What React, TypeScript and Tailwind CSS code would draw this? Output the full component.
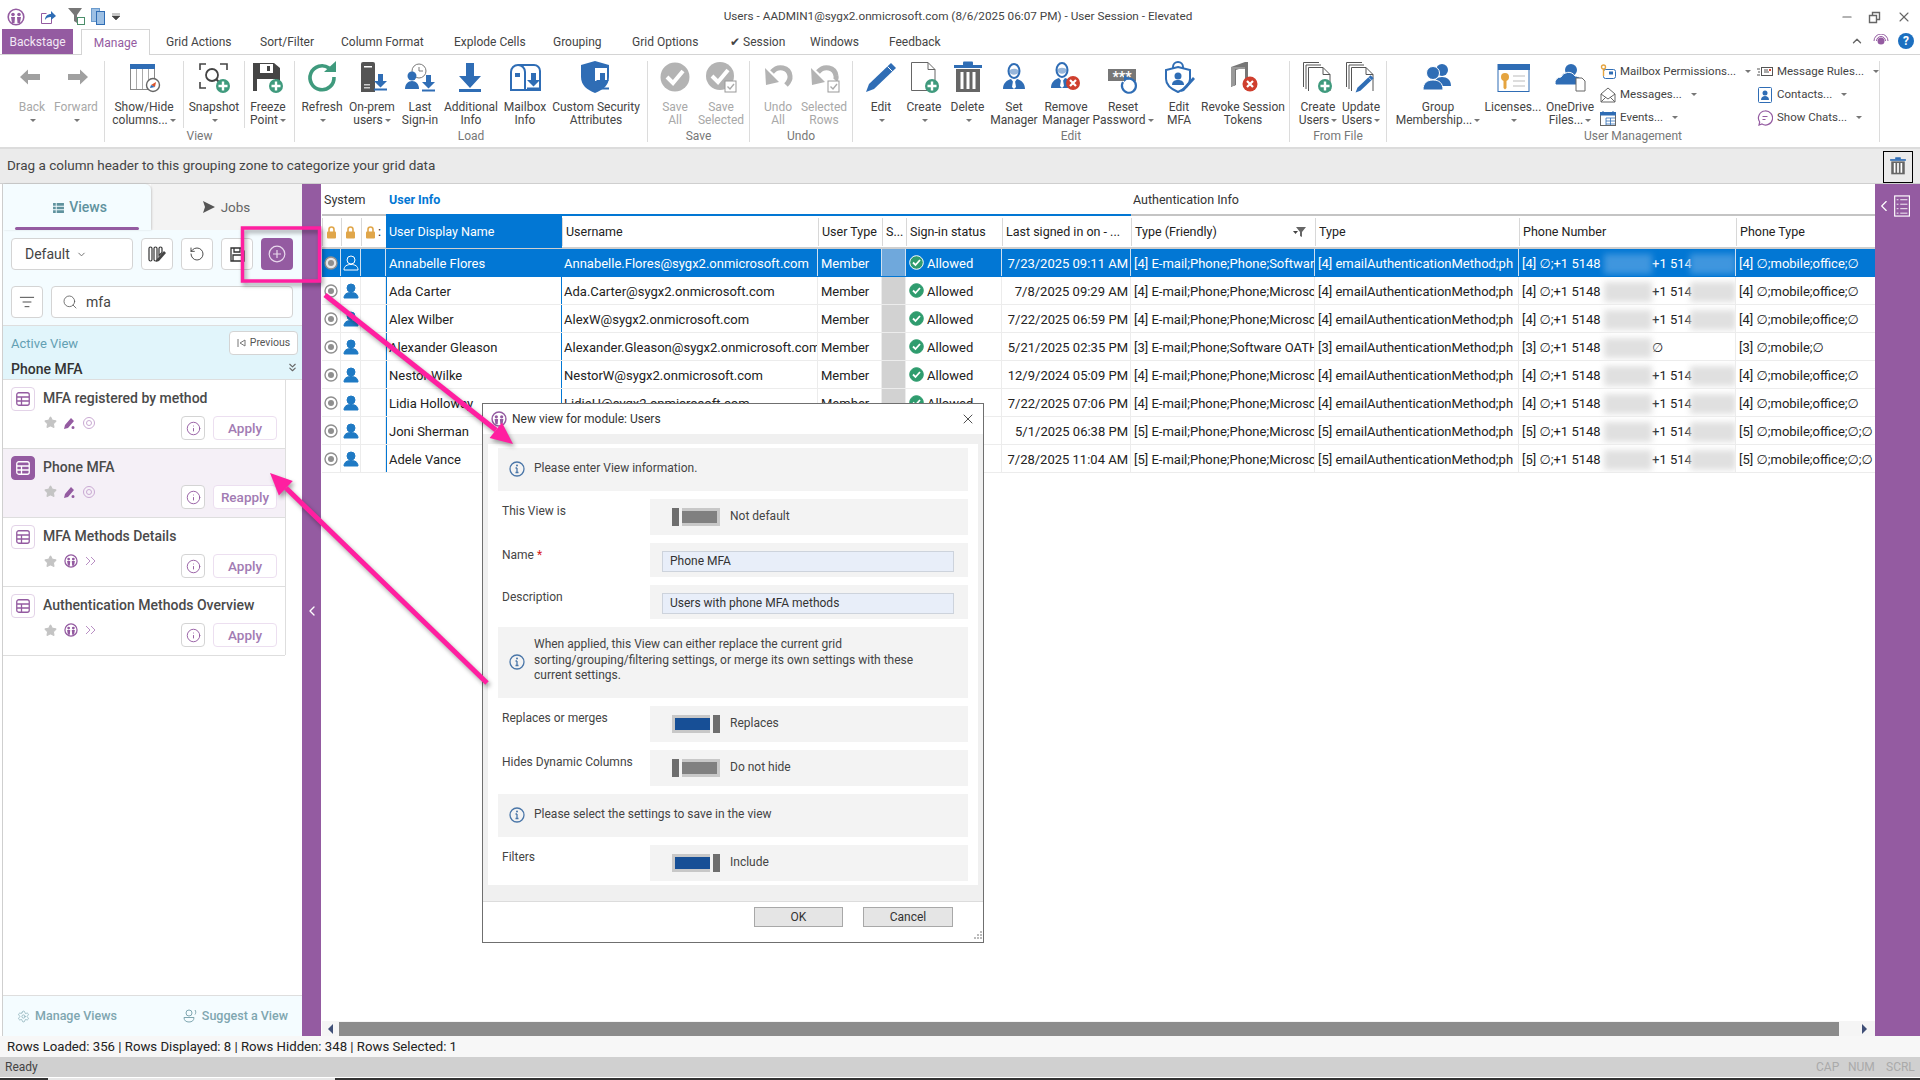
import React from 'react';
import { ChevronDown, ChevronLeft, ChevronUp, ChevronsDown, Info, ListFilter, Minus, RotateCcw, Search, Settings, Star, X } from 'lucide-react';

const BLUE = '#2f6db5';
const GREEN = '#3f9a7d';
const RED = '#cf3f2e';
const GRAY = '#b3b3b3';

const PlusBadge = ({ x, y, r = 7 }: { x: number; y: number; r?: number }) => (
  <g>
    <circle cx={x} cy={y} r={r} fill={GREEN} />
    <path d={`M${x - r + 2.5} ${y}H${x + r - 2.5}M${x} ${y - r + 2.5}V${y + r - 2.5}`} stroke="#fff" strokeWidth="2.4" />
  </g>
);
const XBadge = ({ x, y, r = 7 }: { x: number; y: number; r?: number }) => (
  <g>
    <circle cx={x} cy={y} r={r} fill={RED} />
    <path d={`M${x - 3} ${y - 3}L${x + 3} ${y + 3}M${x + 3} ${y - 3}L${x - 3} ${y + 3}`} stroke="#fff" strokeWidth="2.2" />
  </g>
);
const Dl = ({ x, y }: { x: number; y: number }) => (
  <g transform={`translate(${x} ${y})`}>
    <path d="M4 0h5v7h4l-6.5 6.5L0 7h4z" fill={BLUE} />
    <rect y="14.5" width="13" height="2" fill={BLUE} />
  </g>
);
const CheckBox = () => (
  <g>
    <rect x="20" y="20" width="11" height="11" fill="#fff" stroke="#999" />
    <path d="M22.5 25.5l2.5 2.5 4-5" fill="none" stroke="#aaa" strokeWidth="1.4" />
  </g>
);
const Person = ({ x = 0, y = 0 }: { x?: number; y?: number }) => (
  <g transform={`translate(${x} ${y})`}>
    <ellipse cx="12" cy="8" rx="5.5" ry="7" fill="none" stroke={BLUE} strokeWidth="2" />
    <path d="M7 8c2-3 8-3 10 0-1 5-9 5-10 0z" fill={BLUE} opacity=".5" />
    <path d="M1 26c0-6 4-9 8-10l3 4 3-4c4 1 8 4 8 10z" fill={BLUE} />
    <path d="M11 18h2l1 6-2 2-2-2z" fill="#fff" />
  </g>
);
const Stack = () => (
  <g fill="none" stroke="#555" strokeWidth="1">
    <path d="M1.500 26V1.500H17" />
    <path d="M4 28V4h15" />
    <path d="M6.500 30V6.500H21l7 7V30" fill="#fff" />
    <path d="M21 6.500v7h7" />
  </g>
);
const Pencil = ({ t }: { t: string }) => (
  <g transform={t}>
    <path d="M26 2l5 5L9 28l-8 3 3-8z" fill={BLUE} />
    <path d="M22.500 5.500l5 5" stroke="#fff" strokeWidth="1" />
  </g>
);

const icons: Record<string, React.ReactNode> = {
  back: <path d="M4 16l8-7.500V13h12v6H12v4.500z" fill="#a0a0a0" />,
  forward: <path d="M28 16l-8-7.500V13H8v6h12v4.500z" fill="#a0a0a0" />,
  showhide: (
    <g>
      <rect x="2.500" y="3.500" width="24" height="25" fill="#fff" stroke="#888" />
      <rect x="2" y="3" width="25" height="5" fill={BLUE} />
      <path d="M8.500 8v20M14.500 8v20M20.500 8v20" stroke="#aaa" />
      <circle cx="25" cy="24" r="6.500" fill="#fff" stroke="#666" strokeWidth="1.400" />
      <path d="M28 21l-5 3 4 2z" fill="#d9532c" />
      <path d="M22 27l1-3 4 2z" fill={BLUE} />
    </g>
  ),
  snapshot: (
    <g>
      <path d="M2 9V3h6M22 3h7v6M2 21v6h6" fill="none" stroke="#444" strokeWidth="1.600" />
      <circle cx="14" cy="14" r="6" fill="none" stroke="#444" strokeWidth="1.800" />
      <path d="M18 18l3 3" stroke="#444" strokeWidth="2" />
      <PlusBadge x={25} y={25} />
    </g>
  ),
  freeze: (
    <g>
      <path d="M1 2h21l6 5v23H1z" fill="#454545" />
      <rect x="8" y="3" width="13" height="9" fill="#fff" />
      <rect x="15" y="5" width="3" height="5" fill="#454545" />
      <rect x="5" y="18" width="18" height="12" fill="#fff" />
      <PlusBadge x={24} y={25} />
    </g>
  ),
  refresh: (
    <g>
      <path d="M23 7a12 12 0 1 0 5 9" fill="none" stroke={GREEN} strokeWidth="3.600" />
      <path d="M18 11L30 0v11z" fill={GREEN} />
    </g>
  ),
  onprem: (
    <g>
      <path d="M5 3a2 2 0 0 1 2-2h10a2 2 0 0 1 2 2v28H5z" fill="#545454" />
      <rect x="8" y="5" width="8" height="1.500" fill="#fff" />
      <rect x="8" y="26" width="6" height="1.500" fill="#ccc" />
      <rect x="8" y="23" width="6" height="1.500" fill="#ccc" />
      <Dl x={18} y={13} />
    </g>
  ),
  last: (
    <g>
      <circle cx="15" cy="10" r="7" fill="#fff" stroke="#7a7a7a" />
      <path d="M15 6v4h4" fill="none" stroke="#7a7a7a" />
      <circle cx="8" cy="15" r="4.500" fill={BLUE} />
      <path d="M1 28c0-5 3-8 7-8s7 3 7 8z" fill={BLUE} />
      <Dl x={18} y={14} />
    </g>
  ),
  additional: (
    <g>
      <path d="M11 2h8v13h7L15 27 4 15h7z" fill={BLUE} />
      <rect x="4" y="28" width="22" height="3" fill={BLUE} />
    </g>
  ),
  mailbox: (
    <g>
      <path d="M2 29V11a7 7 0 0 1 7-7h16a6 6 0 0 1 6 6v19z" fill="#fff" stroke={BLUE} strokeWidth="2" />
      <path d="M9 4a7 7 0 0 1 7 7v18" fill="none" stroke={BLUE} strokeWidth="2" />
      <rect x="6" y="12" width="5" height="4" fill={BLUE} />
      <Dl x={18} y={12} />
    </g>
  ),
  custom: (
    <g>
      <path d="M15 0l14 4v12c0 8-6 13-14 16C7 29 1 24 1 16V4z" fill={BLUE} />
      <path d="M15 7h12v13H15z" fill="#fff" />
      <Dl x={16} y={12} />
    </g>
  ),
  saveall: (
    <g>
      <circle cx="16" cy="16" r="14.500" fill={GRAY} />
      <path d="M8 16l6 6 10-12" fill="none" stroke="#fff" strokeWidth="4" />
    </g>
  ),
  savesel: (
    <g>
      <circle cx="15" cy="15" r="14" fill={GRAY} />
      <path d="M7 15l6 6 10-12" fill="none" stroke="#fff" strokeWidth="4" />
      <CheckBox />
    </g>
  ),
  undoall: (
    <g>
      <path d="M10 11c6-7 17-5 18 4 .5 4-2 7-4 9" fill="none" stroke={GRAY} strokeWidth="5" />
      <path d="M3 7l1 17 13-3z" fill={GRAY} />
    </g>
  ),
  undosel: (
    <g>
      <path d="M10 11c6-7 17-5 18 4 .5 2 0 3-1 4" fill="none" stroke={GRAY} strokeWidth="5" />
      <path d="M3 7l1 17 13-3z" fill={GRAY} />
      <CheckBox />
    </g>
  ),
  edit: <Pencil t="translate(0 0)" />,
  create: (
    <g>
      <path d="M3.500 1.500H20l7 7v21H3.500z" fill="#fff" stroke="#666" />
      <path d="M20 1.500v7h7" fill="none" stroke="#666" />
      <PlusBadge x={24} y={25} />
    </g>
  ),
  trash: (
    <g>
      <rect x="2" y="4" width="28" height="3" fill={BLUE} />
      <rect x="11" y="0.500" width="10" height="4" rx="1" fill={BLUE} />
      <rect x="4" y="8" width="24" height="23" fill="#666" />
      <path d="M10 11v17M16 11v17M22 11v17" stroke="#fff" strokeWidth="3" />
    </g>
  ),
  setmgr: <Person x={4} y={2} />,
  removemgr: (
    <g>
      <Person x={0} y={1} />
      <XBadge x={23} y={22} />
    </g>
  ),
  reset: (
    <g>
      <rect x="1" y="8" width="28" height="12" fill="#777" />
      <text x="15" y="21" textAnchor="middle" fontSize="14" fontFamily="Roboto" fontWeight="700" fill="#fff">***</text>
      <path d="M16 21a7 7 0 1 0 4-3" fill="#fff" stroke={BLUE} strokeWidth="2.200" />
      <path d="M17 14l5 3-5 4z" fill={BLUE} />
    </g>
  ),
  editmfa: (
    <g>
      <path d="M10 7V6a5 5 0 0 1 10 0v1" fill="none" stroke={BLUE} strokeWidth="2" />
      <path d="M15 6l12 3v9c0 6-5 10-12 13C8 28 3 24 3 18V9z" fill="#fff" stroke={BLUE} strokeWidth="2" />
      <circle cx="15" cy="15" r="3.500" fill={BLUE} />
      <path d="M9 24c0-4 3-5 6-5s6 1 6 5z" fill={BLUE} />
      <path d="M30 16l2 2-11 12-3 1 1-3z" fill={BLUE} />
    </g>
  ),
  revoke: (
    <g>
      <path d="M4 6l14-5h3v20h-3V6L9 9v15l-5 2z" fill="#777" />
      <path d="M4 6h14v2H8v17H4z" fill="#999" />
      <XBadge x={23} y={23} r={7.500} />
    </g>
  ),
  createusers: (
    <g>
      <Stack />
      <PlusBadge x={23} y={25} />
    </g>
  ),
  updateusers: (
    <g>
      <Stack />
      <Pencil t="translate(10 13) scale(.6)" />
    </g>
  ),
  group: (
    <g fill={BLUE}>
      <circle cx="20" cy="9" r="6" />
      <path d="M12 25c0-6 3-9 8-9s9 3 9 9z" />
      <circle cx="11" cy="12" r="6.500" fill={BLUE} stroke="#fff" />
      <path d="M1 29c0-7 4-10 10-10s10 3 10 10z" stroke="#fff" />
    </g>
  ),
  licenses: (
    <g>
      <rect x="1" y="3.500" width="31" height="27" fill="#fff" stroke={BLUE} />
      <rect x="1" y="3" width="32" height="6" fill={BLUE} />
      <circle cx="8" cy="16" r="4" fill="#e5a43f" />
      <path d="M6.500 18h3v9l-1.500 1.500L6.500 27z" fill="#e5a43f" />
      <path d="M16 15h12M16 20h12M16 25h12" stroke="#bbb" />
    </g>
  ),
  onedrive: (
    <g>
      <circle cx="17" cy="9" r="6" fill={BLUE} />
      <path d="M1 23a6 6 0 0 1 6-7 8 8 0 0 1 14-1c5 0 8 4 7 8v1H2z" fill={BLUE} stroke="#fff" />
      <path d="M22 17h6l3 3v10h-9z" fill="#fff" stroke="#666" />
    </g>
  ),
};

type RibbonItem = { icon: string; w: string; lines: string[]; caret?: boolean; off?: boolean };
type RibbonGroup = { label?: string; w: string; pad?: string; items: (RibbonItem | 'sep')[] };

const groups: RibbonGroup[] = [
  {
    w: 'w-[105px]',
    pad: 'pl-[10px]',
    items: [
      { icon: 'back', w: 'w-[44px]', lines: ['Back'], caret: true, off: true },
      { icon: 'forward', w: 'w-[44px]', lines: ['Forward'], caret: true, off: true },
    ],
  },
  {
    label: 'View',
    w: 'w-[190px]',
    items: [
      { icon: 'showhide', w: 'w-[78px]', lines: ['Show/Hide', 'columns...'], caret: true },
      'sep',
      { icon: 'snapshot', w: 'w-[60px]', lines: ['Snapshot'], caret: true },
      'sep',
      { icon: 'freeze', w: 'w-[46px]', lines: ['Freeze', 'Point'], caret: true },
    ],
  },
  {
    label: 'Load',
    w: 'w-[353px]',
    items: [
      { icon: 'refresh', w: 'w-[54px]', lines: ['Refresh'], caret: true },
      { icon: 'onprem', w: 'w-[46px]', lines: ['On-prem', 'users'], caret: true },
      { icon: 'last', w: 'w-[50px]', lines: ['Last', 'Sign-in'] },
      { icon: 'additional', w: 'w-[52px]', lines: ['Additional', 'Info'] },
      { icon: 'mailbox', w: 'w-[56px]', lines: ['Mailbox', 'Info'] },
      { icon: 'custom', w: 'w-[86px]', lines: ['Custom Security', 'Attributes'] },
    ],
  },
  {
    label: 'Save',
    w: 'w-[102px]',
    pad: 'pl-[4px]',
    items: [
      { icon: 'saveall', w: 'w-[46px]', lines: ['Save', 'All'], off: true },
      { icon: 'savesel', w: 'w-[46px]', lines: ['Save', 'Selected'], off: true },
    ],
  },
  {
    label: 'Undo',
    w: 'w-[103px]',
    pad: 'pl-[5px]',
    items: [
      { icon: 'undoall', w: 'w-[46px]', lines: ['Undo', 'All'], off: true },
      { icon: 'undosel', w: 'w-[46px]', lines: ['Selected', 'Rows'], off: true },
    ],
  },
  {
    label: 'Edit',
    w: 'w-[437px]',
    pad: 'pl-[5px]',
    items: [
      { icon: 'edit', w: 'w-[46px]', lines: ['Edit'], caret: true },
      { icon: 'create', w: 'w-[40px]', lines: ['Create'], caret: true },
      { icon: 'trash', w: 'w-[47px]', lines: ['Delete'], caret: true },
      { icon: 'setmgr', w: 'w-[46px]', lines: ['Set', 'Manager'] },
      { icon: 'removemgr', w: 'w-[58px]', lines: ['Remove', 'Manager'] },
      { icon: 'reset', w: 'w-[56px]', lines: ['Reset', 'Password'], caret: true },
      { icon: 'editmfa', w: 'w-[56px]', lines: ['Edit', 'MFA'] },
      { icon: 'revoke', w: 'w-[72px]', lines: ['Revoke Session', 'Tokens'] },
    ],
  },
  {
    label: 'From File',
    w: 'w-[97px]',
    pad: 'pl-[6px]',
    items: [
      { icon: 'createusers', w: 'w-[44px]', lines: ['Create', 'Users'], caret: true },
      { icon: 'updateusers', w: 'w-[42px]', lines: ['Update', 'Users'], caret: true },
    ],
  },
];

const umItems: RibbonItem[] = [
  { icon: 'group', w: 'w-[92px]', lines: ['Group', 'Membership...'], caret: true },
  { icon: 'licenses', w: 'w-[58px]', lines: ['Licenses...'], caret: true },
  { icon: 'onedrive', w: 'w-[56px]', lines: ['OneDrive', 'Files...'], caret: true },
];

const Caret = () => <span className="inline-block w-0 h-0 ml-[2px] mb-[2px] border-x-[3px] border-x-transparent border-t-[3px] border-t-[#777]" />;

const RibbonBtn = ({ item }: { item: RibbonItem }) => (
  <div className={`${item.w} flex flex-col items-center shrink-0 ${item.off ? 'text-[#a8a8a8]' : 'text-[#444]'}`}>
    <div className="h-[40px] w-full flex justify-center items-start">
      <svg width="32" height="32" viewBox="0 0 32 32" className="overflow-visible">{icons[item.icon]}</svg>
    </div>
    <div className="leading-[13px] text-center whitespace-nowrap">{item.lines[0]}</div>
    <div className="leading-[13px] text-center whitespace-nowrap">
      {item.lines[1]}
      {item.caret && <Caret />}
    </div>
  </div>
);

const SmallIcon = ({ name }: { name: string }) => (
  <svg width="16" height="16" viewBox="0 0 16 16" className="shrink-0">
    {name === 'perm' && (
      <g>
        <rect x="3.500" y="5.500" width="12" height="9" rx="2" fill="#fff" stroke={BLUE} />
        <rect x="9" y="7.500" width="4" height="3" fill={BLUE} />
        <circle cx="3.500" cy="3" r="2" fill="none" stroke="#e5a43f" strokeWidth="1.400" />
        <path d="M3.500 5v7" stroke="#e5a43f" strokeWidth="1.400" />
      </g>
    )}
    {name === 'msg' && <path d="M1 7l7-6 7 6v8H1zM1 7l7 5 7-5M1 15l5-5M15 15l-5-5" fill="#fff" stroke="#666" />}
    {name === 'cal' && (
      <g>
        <rect x="0.500" y="2.500" width="15" height="13" fill="#fff" stroke="#666" />
        <rect y="2" width="16" height="3.500" fill={BLUE} />
        <path d="M6 8h9M6 11h9M6 14h9M6 8v7M10.500 8v7" stroke={BLUE} strokeWidth=".8" />
        <path d="M3 1v3M13 1v3" stroke={BLUE} />
      </g>
    )}
    {name === 'rules' && (
      <g>
        <rect x="4.500" y="3.500" width="11" height="8" fill="#fff" stroke="#555" />
        <path d="M0 5h3M1 8h2M0 11h3M7 6h4M7 8h5" stroke="#555" />
        <rect x="12" y="5" width="2" height="2" fill="#d9432f" />
      </g>
    )}
    {name === 'contact' && (
      <g>
        <rect x="1.500" y="0.500" width="13" height="15" rx="1" fill="#fff" stroke={BLUE} />
        <circle cx="8" cy="6" r="2.500" fill={BLUE} />
        <path d="M4 13c0-3 2-4 4-4s4 1 4 4z" fill={BLUE} />
      </g>
    )}
    {name === 'chat' && <path d="M8 1a7 7 0 1 1-3 13l-3 1 .7-3A7 7 0 0 1 8 1zM5.500 6.500h5M5.500 9.500h3" fill="#fff" stroke="#945ba1" strokeWidth="1.200" />}
  </svg>
);

const SmallBtn = ({ icon, text }: { icon: string; text: string }) => (
  <div className="flex items-center h-[23px] text-[#444] text-[11.500px] whitespace-nowrap">
    <SmallIcon name={icon} />
    <span className="ml-[4px]">{text}</span>
    <span className="ml-[7px]">
      <Caret />
    </span>
  </div>
);

const tabs = [
  { t: 'Grid Actions', w: 'w-[94px]' },
  { t: 'Sort/Filter', w: 'w-[81px]' },
  { t: 'Column Format', w: 'w-[113px]' },
  { t: 'Explode Cells', w: 'w-[99px]' },
  { t: 'Grouping', w: 'w-[79px]' },
  { t: 'Grid Options', w: 'w-[98px]' },
  { t: '✔ Session', w: 'w-[80px]' },
  { t: 'Windows', w: 'w-[79px]' },
  { t: 'Feedback', w: 'w-[80px]' },
];

const AppLogo = ({ size = 18 }: { size?: number }) => (
  <svg width={size} height={size} viewBox="0 0 18 18">
    <circle cx="9" cy="9" r="7.800" fill="#fff" stroke="#945ba1" strokeWidth="1.600" />
    <circle cx="6" cy="6.500" r="1.800" fill="#945ba1" />
    <circle cx="12" cy="6.500" r="1.800" fill="#945ba1" />
    <path d="M4 9h4l-.5 6H5zM10 9h4l-1 6h-2.500z" fill="#945ba1" />
  </svg>
);

const TitleBar = () => (
  <div className="h-[29px] shrink-0 flex items-center pt-[4px]">
    <div className="flex items-center pl-[7px]">
      <AppLogo />
      <svg width="16" height="16" viewBox="0 0 16 16" className="ml-[15px]">
        <path d="M1.500 4.500h5M1.500 4.500v10h10v-5" fill="none" stroke="#945ba1" />
        <path d="M5 11c0-4 3-6 6-6V2l5 5-5 4V8c-3 0-5 1-6 3z" fill={BLUE} />
      </svg>
      <svg width="18" height="20" viewBox="0 0 18 20" className="ml-[12px]">
        <path d="M0 1h14L9 8v8l-3-2V8z" fill="#777" />
        <rect x="9.500" y="10.500" width="7" height="7" fill="#fff" stroke="#4b8f6a" />
      </svg>
      <svg width="14" height="18" viewBox="0 0 14 18" className="ml-[5px]">
        <rect x="0.500" y="0.500" width="8" height="13" fill="#9dc0e4" stroke="#6b9bcd" />
        <rect x="5.500" y="3.500" width="8" height="13" fill="#9dc0e4" stroke={BLUE} />
      </svg>
      <svg width="8" height="8" viewBox="0 0 8 8" className="ml-[7px]">
        <path d="M0 1h8M0 3h8L4 7z" fill="#444" stroke="#444" strokeWidth=".6" />
      </svg>
    </div>
    <div className="flex-1 text-center text-[#444] text-[11.750px] pr-[44px]">Users - AADMIN1@sygx2.onmicrosoft.com (8/6/2025 06:07 PM) - User Session - Elevated</div>
    <div className="flex items-center gap-[14px] pr-[8px] text-[#666]">
      <Minus size={14} />
      <svg width="14" height="14" viewBox="0 0 14 14">
        <path d="M1.500 5.500h7v7h-7zM4.500 5.500v-3h7v7h-3" fill="none" stroke="#666" strokeWidth="1.400" />
      </svg>
      <X size={16} strokeWidth={1.600} />
    </div>
  </div>
);

const Tabs = () => (
  <div className="h-[26px] shrink-0 flex items-stretch border-b border-[#d4d4d4] pl-[2px]">
    <div className="w-[71px] h-[25px] bg-[#945ba1] text-[#f2e8f4] flex items-center justify-center">Backstage</div>
    <div className="ml-[8px] w-[69px] h-[26px] bg-white border border-b-0 border-[#d4d4d4] text-[#945ba1] flex items-center justify-center pt-[1px]">Manage</div>
    {tabs.map((t) => (
      <div key={t.t} className={`${t.w} pl-[16px] pt-[1px] flex items-center text-[#444] whitespace-nowrap`}>{t.t}</div>
    ))}
    <div className="ml-auto flex items-center gap-[9px] pr-[6px] pb-[2px]">
      <ChevronUp size={14} className="text-[#666]" strokeWidth={2.400} />
      <svg width="16" height="14" viewBox="0 0 16 14">
        <circle cx="8" cy="7" r="3.500" fill="#945ba1" />
        <path d="M1 7a7 7 0 0 1 14 0M3.500 7a4.500 4.500 0 0 1 9 0" fill="none" stroke="#945ba1" />
      </svg>
      <div className="w-[16px] h-[16px] rounded-full bg-[#1c6fc0] text-white text-[12px] font-bold flex items-center justify-center">?</div>
    </div>
  </div>
);

const Ribbon = () => (
  <div className="h-[94px] shrink-0 flex border-b-2 border-[#dcdcdc] pt-[6px]">
    {groups.map((g, i) => (
      <div key={i} className={`${g.w} h-[81px] shrink-0 flex flex-col border-r border-[#dcdcdc]`}>
        <div className={`h-[69px] flex ${g.pad ?? ''}`}>
          {g.items.map((it, j) => (it === 'sep' ? <div key={j} className="w-px h-[67px] bg-[#dcdcdc] shrink-0" /> : <RibbonBtn key={j} item={it} />))}
        </div>
        <div className="h-[12px] leading-[13px] text-center text-[#777]">{g.label}</div>
      </div>
    ))}
    <div className="w-[493px] h-[81px] shrink-0 flex flex-col border-r border-[#dcdcdc]">
      <div className="h-[69px] flex pl-[5px]">
        {umItems.map((it) => (
          <RibbonBtn key={it.icon} item={it} />
        ))}
        <div className="w-[160px] pl-[2px] -mt-[1px] flex flex-col">
          <SmallBtn icon="perm" text="Mailbox Permissions..." />
          <SmallBtn icon="msg" text="Messages..." />
          <SmallBtn icon="cal" text="Events..." />
        </div>
        <div className="-mt-[1px] flex flex-col">
          <SmallBtn icon="rules" text="Message Rules..." />
          <SmallBtn icon="contact" text="Contacts..." />
          <SmallBtn icon="chat" text="Show Chats..." />
        </div>
      </div>
      <div className="h-[12px] leading-[13px] text-center text-[#777]">User Management</div>
    </div>
  </div>
);

const GroupZone = () => (
  <div className="h-[35px] shrink-0 bg-[#ebebeb] flex items-center pl-[7px] pr-[7px] text-[13.500px] text-[#444] border-b border-[#cfcfcf]">
    <span className="flex-1 pb-[2px]">Drag a column header to this grouping zone to categorize your grid data</span>
    <div className="w-[30px] h-[32px] mt-[2px] border border-black flex items-center justify-center">
      <svg width="18" height="22" viewBox="0 0 32 36">{icons.trash}</svg>
    </div>
  </div>
);

const TableIcon = ({ color }: { color: string }) => (
  <svg width="14" height="14" viewBox="0 0 14 14">
    <rect x="0.750" y="0.750" width="12.500" height="12.500" rx="2" fill="none" stroke={color} strokeWidth="1.300" />
    <path d="M1 5h12M1 9h12M5.500 5v8.500" stroke={color} strokeWidth="1.300" />
  </svg>
);

const views = [
  { name: 'MFA registered by method', kind: 'mine', btn: 'Apply', active: false },
  { name: 'Phone MFA', kind: 'mine', btn: 'Reapply', active: true },
  { name: 'MFA Methods Details', kind: 'shared', btn: 'Apply', active: false },
  { name: 'Authentication Methods Overview', kind: 'shared', btn: 'Apply', active: false },
];

const ViewItem = ({ v }: { v: (typeof views)[number] }) => (
  <div className={`h-[69px] border-b border-[#dedede] relative pl-[8px] pt-[7px] flex ${v.active ? 'bg-[#f5f0f7]' : 'bg-white'}`}>
    <div className={`w-[24px] h-[24px] rounded-[4px] border flex items-center justify-center ${v.active ? 'bg-[#945ba1] border-[#945ba1]' : 'bg-white border-[#e3d3e8]'}`}>
      <TableIcon color={v.active ? '#fff' : '#945ba1'} />
    </div>
    <div className="ml-[8px] flex-1">
      <div className="text-[14px] leading-[20px] pt-[1px] font-medium text-[#4a4a4a] whitespace-nowrap">{v.name}</div>
      <div className="flex items-center gap-[7px] mt-[8px] ml-[1px]">
        <Star size={13} fill="#c4c4c4" stroke="#c4c4c4" />
        {v.kind === 'mine' ? (
          <>
            <svg width="12" height="12" viewBox="0 0 12 12">
              <path d="M0 12l1-4 6-7 3 3-6 7zM9 9a1.500 1.500 0 1 1 0 3 1.500 1.500 0 0 1 0-3z" fill="#945ba1" />
            </svg>
            <svg width="12" height="12" viewBox="0 0 12 12">
              <circle cx="6" cy="6" r="5.500" fill="none" stroke="#c9a9d2" />
              <path d="M3.500 6a2.500 2.500 0 0 1 5 0M8.500 6a2.500 2.500 0 0 1-5 0" fill="none" stroke="#c9a9d2" />
            </svg>
          </>
        ) : (
          <>
            <AppLogo size={14} />
            <svg width="12" height="10" viewBox="0 0 12 10">
              <path d="M1 1l4 4-4 4M6 1l4 4-4 4" fill="none" stroke="#b98fc4" />
            </svg>
          </>
        )}
      </div>
    </div>
    <div className="absolute right-[8px] bottom-[8px] flex gap-[8px]">
      <div className="w-[24px] h-[24px] rounded-[4px] border border-[#d4d4d4] bg-white flex items-center justify-center">
        <Info size={15} className="text-[#945ba1]" strokeWidth={1.500} />
      </div>
      <div className="w-[64px] h-[24px] rounded-[4px] border border-[#ecdff0] bg-white flex items-center justify-center text-[13.500px] font-medium text-[#a27bb3]">{v.btn}</div>
    </div>
  </div>
);

const ToolBtn = ({ children }: { children: React.ReactNode }) => (
  <div className="w-[32px] h-[32px] bg-white border border-[#d4d4d4] rounded-[4px] flex items-center justify-center text-[#333]">{children}</div>
);

const Sidebar = () => (
  <div className="w-[300px] shrink-0 flex flex-col border-l border-[#cfcfcf] ml-[2px] bg-white">
    <div className="flex h-[46px] shrink-0">
      <div className="w-[148px] relative bg-[#f4fcff] rounded-tr-[6px] flex items-center justify-center gap-[5px] pl-[6px] pt-[1px] text-[14px] font-medium text-[#5f929e] shadow-[1px_0_2px_rgba(0,0,0,0.15)]">
        <svg width="11" height="10" viewBox="0 0 12 11" fill="#5f929e">
          <path d="M0 0h3v3H0zM4 0h8v3H4zM0 4h3v3H0zM4 4h8v3H4zM0 8h3v3H0zM4 8h8v3H4z" />
        </svg>
        Views
        <div className="absolute left-[12px] right-[12px] bottom-[0px] h-[3px] rounded-full bg-[#945ba1]" />
      </div>
      <div className="flex-1 bg-[#f3f3f3] flex items-center justify-center gap-[6px] text-[13.500px] text-[#666]">
        <svg width="12" height="12" viewBox="0 0 12 12">
          <path d="M0 0l12 6-12 6 2-6z" fill="#555" />
        </svg>
        Jobs
      </div>
    </div>
    <div className="h-[96px] shrink-0 bg-[#f4fcff] border-b border-[#dedede] pl-[8px] pt-[8px] flex flex-col gap-[16px]">
      <div className="flex h-[32px]">
        <div className="w-[122px] h-[32px] bg-white border border-[#d4d4d4] rounded-[4px] flex items-center pl-[13px] gap-[6px] text-[14px] text-[#444]">
          Default <ChevronDown size={11} className="text-[#666]" />
        </div>
        <div className="ml-[8px] flex gap-[8px]">
          <ToolBtn>
            <svg width="18" height="16" viewBox="0 0 18 16">
              <path d="M1 2.500a1.500 1.500 0 0 1 3 0v11a1.500 1.500 0 0 1-3 0zM6 2.500a1.500 1.500 0 0 1 3 0v11a1.500 1.500 0 0 1-3 0zM11 2.500a1.500 1.500 0 0 1 3 0v4l-3 3z" fill="none" stroke="#333" strokeWidth="1.200" />
              <path d="M16 5l2 2-7 8-3 1 1-3z" fill="#444" />
            </svg>
          </ToolBtn>
          <ToolBtn>
            <RotateCcw size={16} strokeWidth={1.300} />
          </ToolBtn>
          <ToolBtn>
            <svg width="15" height="15" viewBox="0 0 15 15">
              <path d="M1 1h10l3 3v10H1zM4 1v4h6V1M3 14V8h9v6" fill="none" stroke="#333" strokeWidth="1.300" />
            </svg>
          </ToolBtn>
          <div className="w-[32px] h-[32px] bg-[#945ba1] rounded-[4px] flex items-center justify-center">
            <svg width="18" height="18" viewBox="0 0 18 18">
              <circle cx="9" cy="9" r="7.800" fill="none" stroke="#e8d8ec" strokeWidth="1.200" />
              <path d="M9 5v8M5 9h8" stroke="#e8d8ec" strokeWidth="1.200" />
            </svg>
          </div>
        </div>
      </div>
      <div className="flex gap-[8px]">
        <ToolBtn>
          <ListFilter size={16} strokeWidth={1.300} />
        </ToolBtn>
        <div className="w-[242px] h-[32px] bg-white border border-[#d4d4d4] rounded-[4px] flex items-center pl-[10px] gap-[8px] text-[14px] text-[#444]">
          <Search size={16} strokeWidth={1.200} className="text-[#555]" />
          mfa
        </div>
      </div>
    </div>
    <div className="h-[54px] shrink-0 bg-[#e1f5fb] border-b border-[#dedede] relative pl-[8px]">
      <div className="pt-[9px] text-[13px] leading-[18px] text-[#63a0b3]">Active View</div>
      <div className="mt-[7px] text-[14px] leading-[18px] font-medium text-[#333]">Phone MFA</div>
      <div className="absolute right-[4px] top-[5px] w-[69px] h-[24px] bg-white border border-[#d4d4d4] rounded-[4px] flex items-center justify-center gap-[4px] text-[10.500px] text-[#555]">
        <svg width="9" height="8" viewBox="0 0 9 8">
          <path d="M1 0v8M8 1L3 4l5 3z" fill="none" stroke="#777" />
        </svg>
        Previous
      </div>
      <ChevronsDown size={13} className="absolute right-[3px] bottom-[5px] text-[#666]" />
    </div>
    <div className="flex-1">
      <div className="w-[283px] h-[275px] border-r border-[#dedede]">
        {views.map((v) => (
          <ViewItem key={v.name} v={v} />
        ))}
      </div>
    </div>
    <div className="h-[41px] shrink-0 bg-[#f4fcff] border-t border-[#dedede] flex items-center justify-between pl-[14px] pr-[14px] text-[12.500px] font-medium text-[#7fa6b0]">
      <div className="flex items-center gap-[5px]">
        <Settings size={13} strokeWidth={1.300} />
        Manage Views
      </div>
      <div className="flex items-center gap-[5px]">
        <svg width="14" height="14" viewBox="0 0 14 14">
          <circle cx="6" cy="4" r="3" fill="none" stroke="#7fa6b0" />
          <path d="M1 8.500h10c0 3-2 4.500-5 4.500s-5-1.500-5-4.500zM12 1c1 1.500 1 3 0 4.500" fill="none" stroke="#7fa6b0" />
        </svg>
        Suggest a View
      </div>
    </div>
  </div>
);

const gridCols = 'grid grid-cols-[19px_20px_25px_176px_256px_64px_24px_96px_129px_184px_204px_217px_139px]';

type Row = { name: string; user: string; date: string; friendly: string; n: string; phone2: boolean; ptype: string };

const mic = 'E-mail;Phone;Phone;Microsc';
const rows: Row[] = [
  { name: 'Annabelle Flores', user: 'Annabelle.Flores@sygx2.onmicrosoft.com', date: '7/23/2025 09:11 AM', friendly: '[4] E-mail;Phone;Phone;Softwar', n: '[4]', phone2: true, ptype: '[4] ∅;mobile;office;∅' },
  { name: 'Ada Carter', user: 'Ada.Carter@sygx2.onmicrosoft.com', date: '7/8/2025 09:29 AM', friendly: `[4] ${mic}`, n: '[4]', phone2: true, ptype: '[4] ∅;mobile;office;∅' },
  { name: 'Alex Wilber', user: 'AlexW@sygx2.onmicrosoft.com', date: '7/22/2025 06:59 PM', friendly: `[4] ${mic}`, n: '[4]', phone2: true, ptype: '[4] ∅;mobile;office;∅' },
  { name: 'Alexander Gleason', user: 'Alexander.Gleason@sygx2.onmicrosoft.com', date: '5/21/2025 02:35 PM', friendly: '[3] E-mail;Phone;Software OATH', n: '[3]', phone2: false, ptype: '[3] ∅;mobile;∅' },
  { name: 'Nestor Wilke', user: 'NestorW@sygx2.onmicrosoft.com', date: '12/9/2024 05:09 PM', friendly: `[4] ${mic}`, n: '[4]', phone2: true, ptype: '[4] ∅;mobile;office;∅' },
  { name: 'Lidia Holloway', user: 'LidiaH@sygx2.onmicrosoft.com', date: '7/22/2025 07:06 PM', friendly: `[4] ${mic}`, n: '[4]', phone2: true, ptype: '[4] ∅;mobile;office;∅' },
  { name: 'Joni Sherman', user: 'JoniS@sygx2.onmicrosoft.com', date: '5/1/2025 06:38 PM', friendly: `[5] ${mic}`, n: '[5]', phone2: true, ptype: '[5] ∅;mobile;office;∅;∅' },
  { name: 'Adele Vance', user: 'AdeleV@sygx2.onmicrosoft.com', date: '7/28/2025 11:04 AM', friendly: `[5] ${mic}`, n: '[5]', phone2: true, ptype: '[5] ∅;mobile;office;∅;∅' },
];

const Lock = () => (
  <svg width="11" height="13" viewBox="0 0 11 13">
    <path d="M3 6V3.500a2.500 2.500 0 0 1 5 0V6" fill="none" stroke="#e0a64a" strokeWidth="1.600" />
    <rect x="1" y="5.500" width="9" height="7" rx="1" fill="#e0a64a" />
  </svg>
);

const HeadCell = ({ children, active }: { children?: React.ReactNode; active?: boolean }) => (
  <div className={`flex items-center whitespace-nowrap overflow-hidden ${active ? 'h-[32px] bg-[#0277d4] text-white pl-[3px]' : 'h-[28px] mt-[2px] border-l border-[#d8d8d8] pl-[3px] text-[#222]'}`}>{children}</div>
);

const Blur = ({ sel }: { sel: boolean }) => <span className={`shrink-0 block h-[20px] blur-[3px] ${sel ? 'bg-[#3f96de]' : 'bg-[#e0e0e0]'}`} />;

const GridRow = ({ r, sel }: { r: Row; sel: boolean }) => {
  const cell = `flex items-center overflow-hidden whitespace-nowrap pl-[3px] pt-[3px] border-r ${sel ? 'border-[#cfe0f0]' : 'border-[#ececec]'}`;
  return (
    <div className={`${gridCols} h-[28px] border-b ${sel ? 'bg-[#0277d4] text-white border-[#0277d4]' : 'bg-white text-[#222] border-[#ececec]'}`}>
      <div className={`${cell} !pl-0 !pt-0 justify-center`}>
        <svg width="14" height="14" viewBox="0 0 14 14">
          <circle cx="7" cy="7" r="6" fill={sel ? '#e8e8e8' : '#fff'} stroke="#8f8f8f" strokeWidth="1.400" />
          <circle cx="7" cy="7" r="3" fill="#8f8f8f" />
        </svg>
      </div>
      <div className={`${cell} !pl-0 !pt-0 justify-center`}>
        <svg width="16" height="16" viewBox="0 0 16 16">
          <circle cx="8" cy="5" r="4" fill={sel ? 'none' : '#1f7ac4'} stroke={sel ? '#fff' : '#1f7ac4'} />
          <path d="M1 15c0-4 3-5.500 7-5.500s7 1.500 7 5.500z" fill={sel ? 'none' : '#1f7ac4'} stroke={sel ? '#fff' : '#1f7ac4'} />
        </svg>
      </div>
      <div className={cell} />
      <div className={`${cell} border-l border-l-[#0277d4] !border-r-[#0277d4] !pl-[2px]`}>{r.name}</div>
      <div className={`${cell} !pl-[2px]`}>{r.user}</div>
      <div className={cell}>Member</div>
      <div className={`${cell} ${sel ? 'bg-[#6fa8dc]' : 'bg-[#d2d2d2]'}`} />
      <div className={`${cell} gap-[3px]`}>
        <svg width="15" height="15" viewBox="0 0 15 15" className="shrink-0 -mt-[3px]">
          <circle cx="7.500" cy="7.500" r="6.800" fill="#2f9c6e" stroke={sel ? '#fff' : '#2f9c6e'} />
          <path d="M4 7.500l2.500 2.500L11 5" fill="none" stroke="#fff" strokeWidth="1.800" />
        </svg>
        Allowed
      </div>
      <div className={`${cell} justify-end pr-[2px]`}>{r.date}</div>
      <div className={cell}>{r.friendly}</div>
      <div className={cell}>{`${r.n} emailAuthenticationMethod;ph`}</div>
      <div className={cell}>
        <span className="w-[82px] shrink-0">{`${r.n} ∅;+1 5148`}</span>
        <span className="w-[48px] shrink-0">
          <Blur sel={sel} />
        </span>
        {r.phone2 ? (
          <>
            <span className="w-[38px] shrink-0">+1 514</span>
            <span className="w-[46px] shrink-0">
              <Blur sel={sel} />
            </span>
          </>
        ) : (
          <span>∅</span>
        )}
      </div>
      <div className="flex items-center overflow-hidden whitespace-nowrap pl-[3px] pt-[3px]">{r.ptype}</div>
    </div>
  );
};

const Grid = () => (
  <div className="w-[1554px] shrink-0 flex flex-col pl-px text-[13px] bg-white">
    <div className="h-[32px] shrink-0 flex">
      <div className="w-[64px] pl-[2px] pt-[2px] flex items-center text-[#333] text-[12.500px] border-b-2 border-[#c4c4c4]">System</div>
      <div className="w-[745px] pl-[3px] pt-[2px] flex items-center font-bold text-[12.500px] text-[#0277d4] border-b-2 border-[#0277d4]">User Info</div>
      <div className="flex-1 pl-[2px] pt-[2px] flex items-center text-[#333] text-[12.500px] border-b-2 border-[#c4c4c4]">Authentication Info</div>
    </div>
    <div className={`${gridCols} h-[33px] shrink-0 border-b-2 border-[#cfcfcf] text-[12.500px]`}>
      <HeadCell>
        <Lock />
      </HeadCell>
      <HeadCell>
        <Lock />
      </HeadCell>
      <HeadCell>
        <Lock />
        <span className="ml-[2px]">:</span>
      </HeadCell>
      <HeadCell active>User Display Name</HeadCell>
      <HeadCell>Username</HeadCell>
      <HeadCell>User Type</HeadCell>
      <HeadCell>S...</HeadCell>
      <HeadCell>Sign-in status</HeadCell>
      <HeadCell>Last signed in on - ...</HeadCell>
      <HeadCell>
        <span className="flex-1">Type (Friendly)</span>
        <svg width="14" height="12" viewBox="0 0 14 12" className="mr-[8px]">
          <path d="M3 1h10L9 6v5L7 10V6z" fill="#666" />
          <path d="M0 5h5L2.500 8z" fill="#444" />
        </svg>
      </HeadCell>
      <HeadCell>Type</HeadCell>
      <HeadCell>Phone Number</HeadCell>
      <HeadCell>Phone Type</HeadCell>
    </div>
    <div className="flex-1">
      {rows.map((r, i) => (
        <GridRow key={r.name} r={r} sel={i === 0} />
      ))}
    </div>
    <div className="h-[15px] shrink-0 flex items-center bg-[#f5f5f5]">
      <div className="w-[17px] flex justify-center">
        <div className="w-0 h-0 border-y-[5px] border-y-transparent border-r-[5px] border-r-[#3f4f77]" />
      </div>
      <div className="w-[1500px] h-[14px] bg-[#8c8c8c]" />
      <div className="flex-1 flex justify-end pr-[8px]">
        <div className="w-0 h-0 border-y-[5px] border-y-transparent border-l-[5px] border-l-[#3f4f77]" />
      </div>
    </div>
  </div>
);

const RowLabel = ({ children }: { children: React.ReactNode }) => <div className="w-[152px] shrink-0 pl-[4px] pt-[5px] leading-[15px]">{children}</div>;

const Toggle = ({ on, text }: { on: boolean; text: string }) => (
  <div className="flex-1 bg-[#f3f3f3] pl-[22px] flex items-center h-[36px]">
    {on ? (
      <>
        <div className="w-[38px] h-[18px] bg-[#c8c8c8] pl-[3px] py-[3px]">
          <div className="w-full h-full bg-[#174f96]" />
        </div>
        <div className="w-[7px] h-[18px] bg-[#6e6e6e] ml-[3px]" />
      </>
    ) : (
      <>
        <div className="w-[7px] h-[18px] bg-[#6e6e6e] mr-[3px]" />
        <div className="w-[38px] h-[18px] bg-[#c8c8c8] pr-[3px] py-[3px]">
          <div className="w-full h-full bg-[#808080]" />
        </div>
      </>
    )}
    <span className="ml-[10px] mb-[2px]">{text}</span>
  </div>
);

const InfoRow = ({ h, children }: { h: string; children: React.ReactNode }) => (
  <div className={`${h} bg-[#f3f3f3] flex items-center pl-[11px] pb-[2px]`}>
    <svg width="16" height="16" viewBox="0 0 16 16" className="shrink-0">
      <circle cx="8" cy="8" r="7" fill="none" stroke="#4a76a8" strokeWidth="1.300" />
      <path d="M8 7v4.500M6.500 11.500h3M6.500 7H8" fill="none" stroke="#4a76a8" strokeWidth="1.300" />
      <circle cx="8" cy="4.500" r="1" fill="#4a76a8" />
    </svg>
    <div className="ml-[9px] mb-[2px]">{children}</div>
  </div>
);

const Field = ({ value }: { value: string }) => (
  <div className="flex-1 h-[34px] bg-[#f3f3f3] px-[12px] pt-[8px]">
    <div className="w-[292px] h-[21px] bg-[#e8eef9] border border-[#cdd3dc] pl-[7px] leading-[19px] text-[#333]">{value}</div>
  </div>
);

const Dialog = () => (
  <div className="absolute left-[482px] top-[403px] w-[502px] h-[540px] bg-white border border-[#6f6f6f] flex flex-col text-[12px] text-[#444]">
    <div className="h-[30px] shrink-0 flex items-center pl-[8px] pr-[7px]">
      <AppLogo size={16} />
      <span className="ml-[5px] text-[#333]">New view for module: Users</span>
      <X size={16} strokeWidth={1.200} className="ml-auto text-[#222]" />
    </div>
    <div className="h-[467px] shrink-0 bg-[#f0f0f0] px-[5px] pt-[10px]">
      <div className="h-[441px] bg-white px-[10px] pt-[4px] flex flex-col gap-[8px]">
        <InfoRow h="h-[43px]">Please enter View information.</InfoRow>
        <div className="flex">
          <RowLabel>This View is</RowLabel>
          <Toggle on={false} text="Not default" />
        </div>
        <div className="flex">
          <RowLabel>
            Name <span className="text-[#d91c1c]">*</span>
          </RowLabel>
          <Field value="Phone MFA" />
        </div>
        <div className="flex">
          <RowLabel>Description</RowLabel>
          <Field value="Users with phone MFA methods" />
        </div>
        <InfoRow h="h-[71px]">
          <div className="leading-[15.500px]">
            When applied, this View can either replace the current grid
            <br />
            sorting/grouping/filtering settings, or merge its own settings with these
            <br />
            current settings.
          </div>
        </InfoRow>
        <div className="flex">
          <RowLabel>Replaces or merges</RowLabel>
          <Toggle on text="Replaces" />
        </div>
        <div className="flex">
          <RowLabel>Hides Dynamic Columns</RowLabel>
          <Toggle on={false} text="Do not hide" />
        </div>
        <InfoRow h="h-[43px]">Please select the settings to save in the view</InfoRow>
        <div className="flex">
          <RowLabel>Filters</RowLabel>
          <Toggle on text="Include" />
        </div>
      </div>
    </div>
    <div className="flex-1 border-t border-[#dcdcdc] flex justify-end gap-[20px] pr-[30px] pt-[5px] relative">
      <div className="w-[89px] h-[20px] bg-[#e5e5e5] border border-[#a8a8a8] flex items-center justify-center text-[#333]">OK</div>
      <div className="w-[90px] h-[20px] bg-[#e5e5e5] border border-[#a8a8a8] flex items-center justify-center text-[#333]">Cancel</div>
      <svg width="10" height="10" viewBox="0 0 10 10" className="absolute right-[1px] bottom-[1px]" fill="#bbb">
        <path d="M8 0h2v2H8zM5 3h2v2H5zM8 3h2v2H8zM2 6h2v2H2zM5 6h2v2H5zM8 6h2v2H8z" />
      </svg>
    </div>
  </div>
);

const Annotations = () => (
  <svg width="1920" height="1080" viewBox="0 0 1920 1080" className="absolute inset-0 pointer-events-none drop-shadow-[2px_3px_2px_rgba(0,0,0,0.35)]">
    <rect x="242.500" y="228" width="77" height="53" fill="none" stroke="#ff1fa0" strokeWidth="3.500" />
    <path d="M325 295L496 430" stroke="#ff1fa0" strokeWidth="5" />
    <path d="M513 444L489.600 438.100L502 422.500z" fill="#ff1fa0" />
    <path d="M487 683L286 488" stroke="#ff1fa0" strokeWidth="5" />
    <path d="M270 473L292.800 481.100L278.900 495.500z" fill="#ff1fa0" />
  </svg>
);

export default function App() {
  return (
    <div className="relative w-[1920px] h-[1080px] overflow-hidden bg-white flex flex-col text-[12px] [font-family:Roboto,'DejaVu_Sans',sans-serif]">
      <TitleBar />
      <Tabs />
      <Ribbon />
      <GroupZone />
      <div className="h-[852px] shrink-0 flex">
        <Sidebar />
        <div className="w-[19px] shrink-0 bg-[#945ba1] flex items-center justify-center text-white">
          <ChevronLeft size={16} className="mt-[2px]" />
        </div>
        <Grid />
        <div className="w-[45px] shrink-0 bg-[#945ba1] flex justify-end items-start pt-[10px] pr-[10px] gap-[1px]">
          <ChevronLeft size={20} strokeWidth={1.600} className="text-white mt-[2px]" />
          <svg width="18" height="24" viewBox="0 0 18 24">
            <rect x="0.750" y="0.750" width="16.500" height="22.500" fill="none" stroke="#fff" strokeWidth="1.300" />
            <path d="M3 5h2M7 5h8M3 10h2M7 10h8M3 15h2M7 15h8M3 20h2M7 20h8" stroke="#fff" />
          </svg>
        </div>
      </div>
      <div className="h-[21px] shrink-0 bg-[#f7f7f7] flex items-center pl-[7px] text-[13.200px] text-[#222]">Rows Loaded: 356 | Rows Displayed: 8 | Rows Hidden: 348 | Rows Selected: 1</div>
      <div className="h-[20px] shrink-0 bg-[#d0d0d0] flex items-center pl-[5px] text-[#444]">
        <span className="flex-1">Ready</span>
        <span className="text-[#aaa] w-[32px]">CAP</span>
        <span className="text-[#aaa] w-[38px]">NUM</span>
        <span className="text-[#aaa] w-[34px]">SCRL</span>
      </div>
      <div className="h-px shrink-0 bg-white" />
      <div className="flex-1 flex">
        <div className="w-[48px] bg-[#333]" />
        <div className="w-[287px] bg-[#e8e8e8]" />
        <div className="flex-1 bg-[#333]" />
      </div>
      <Dialog />
      <Annotations />
    </div>
  );
}
